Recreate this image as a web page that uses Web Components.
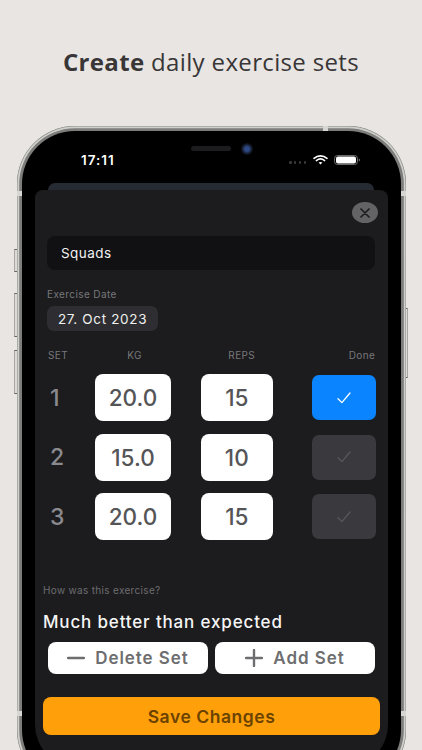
<!DOCTYPE html>
<html lang="en">
<head>
<meta charset="utf-8">
<title>Create daily exercise sets</title>
<style>
  html, body { margin: 0; height: 100%; overflow: hidden; background: #e9e5e3; }
</style>
</head>
<body>
<shot-page>
  <span slot="caption"><b>Create</b> daily exercise sets</span>
  <phone-frame>
    <status-bar time="17:11"></status-bar>
    <exercise-sheet>
      <name-field>Squads</name-field>
      <date-field label="Exercise Date">27. Oct 2023</date-field>
      <set-table>
        <set-row num="1" kg="20.0" reps="15" done></set-row>
        <set-row num="2" kg="15.0" reps="10"></set-row>
        <set-row num="3" kg="20.0" reps="15"></set-row>
      </set-table>
      <feeling-note label="How was this exercise?">Much better than expected</feeling-note>
      <div slot="actions" style="display:flex;gap:7px">
        <action-button icon="minus">Delete Set</action-button>
        <action-button icon="plus">Add Set</action-button>
      </div>
      <save-button slot="save">Save Changes</save-button>
    </exercise-sheet>
  </phone-frame>
</shot-page>

<script>
const UI_FONT = '"Inter", "Liberation Sans", sans-serif';

class ShotPage extends HTMLElement {
  constructor() {
    super();
    this.attachShadow({ mode: 'open' });
    this.shadowRoot.innerHTML = `
      <style>
        :host { display: block; width: 422px; height: 750px; overflow: hidden; background: #e9e5e3; }
        .caption {
          height: 126px; box-sizing: border-box; padding-top: 45px; text-align: center;
          font: 24px/34px "Open Sans", sans-serif; letter-spacing: .35px; color: #383636;
        }
        ::slotted(span) { white-space: nowrap; }
      </style>
      <div class="caption"><slot name="caption"></slot></div>
      <slot></slot>
    `;
  }
}

class PhoneFrame extends HTMLElement {
  constructor() {
    super();
    this.attachShadow({ mode: 'open' });
    this.shadowRoot.innerHTML = `
      <style>
        :host {
          display: block; position: relative; box-sizing: border-box;
          width: 389px; height: 662px; margin-left: 16.5px; padding: 5px;
          border-radius: 58px; background: #7d7d7b;
          box-shadow: inset 0 0 0 .5px #8a8a88, inset 0 0 0 2.2px #cfcfcb;
        }
        .screen {
          height: 100%; box-sizing: border-box; padding: 0 12.8px 0 13px;
          border-radius: 53px; background: #000; overflow: hidden;
          display: flex; flex-direction: column;
        }
        .btn { position: absolute; width: 2.5px; background: #dcd9d7; border-top: 1.5px solid #666; border-bottom: 1.5px solid #666; box-sizing: border-box; }
        .left { left: -2.5px; border-left: 1px solid #a9a7a5; }
        .right { right: -2.5px; border-right: 1px solid #a9a7a5; }
        .b1 { top: 123px; height: 23px; }
        .b2 { top: 167px; height: 44px; }
        .b3 { top: 224px; height: 44px; }
        .b4 { top: 182px; height: 70px; }
        .band { position: absolute; background: #d8d6d3; }
        .bl1, .bl2, .br1, .br2 { width: 5px; height: 4.5px; }
        .bl1, .bl2 { left: 0; }
        .br1, .br2 { right: 0; }
        .bl1, .br1 { top: 65px; }
        .bl2, .br2 { top: 585px; }
        .bt { left: 306px; top: 0; width: 5px; height: 5px; }
        .speaker { position: absolute; left: 174.5px; top: 20px; width: 40px; height: 4.5px; border-radius: 3px; background: #1c1c1e; }
        .cam { position: absolute; left: 224.5px; top: 16.5px; width: 12px; height: 12px; border-radius: 50%; background: radial-gradient(circle, #2d4a86 0 25%, #10141f 60%, #0a0a0c); }
      </style>
      <i class="btn left b1"></i><i class="btn left b2"></i><i class="btn left b3"></i><i class="btn right b4"></i>
      <div class="screen"><slot></slot></div>
      <i class="band bl1"></i><i class="band bl2"></i><i class="band br1"></i><i class="band br2"></i><i class="band bt"></i>
      <i class="speaker"></i><i class="cam"></i>
    `;
  }
}

class StatusBar extends HTMLElement {
  constructor() {
    super();
    this.attachShadow({ mode: 'open' });
    this.shadowRoot.innerHTML = `
      <style>
        :host {
          display: flex; align-items: center; justify-content: space-between;
          height: 52px; flex: none; box-sizing: border-box; padding: 6px 27.7px 0 46.5px;
          color: #fff; font: 600 13.5px ${UI_FONT}; letter-spacing: 1px;
        }
        .right { display: flex; align-items: center; gap: 6px; }
        .dots { display: flex; gap: 2.4px; margin: 5px 1px 0 0; }
        .dots i { width: 2.4px; height: 2.4px; border-radius: 50%; background: #3a3a3c; }
        svg { display: block; }
      </style>
      <span>${this.getAttribute('time')}</span>
      <div class="right">
        <div class="dots"><i></i><i></i><i></i><i></i></div>
        <svg width="15" height="10" viewBox="0 0 15 10" fill="none" stroke="#fff" stroke-linecap="round" stroke-width="1.6">
          <path d="M1 3.3C4.7.1 10.3.1 14 3.3"/>
          <path d="M3.4 5.6C5.8 3.6 9.2 3.6 11.6 5.6"/>
          <path d="M7.5 9.6L5.6 7.5C6.7 6.8 8.3 6.8 9.4 7.5z" fill="#fff" stroke="none"/>
        </svg>
        <svg width="26" height="10" viewBox="0 0 26 10">
          <rect x=".5" y=".5" width="23" height="9" rx="3" fill="none" stroke="#6c6c70"/>
          <rect x="2" y="1.6" width="20" height="6.8" rx="2" fill="#fff"/>
          <path d="M24.8 3.5c.7.3 1.2.8 1.2 1.5s-.5 1.2-1.2 1.5z" fill="#6c6c70"/>
        </svg>
      </div>
    `;
  }
}

class ExerciseSheet extends HTMLElement {
  constructor() {
    super();
    this.attachShadow({ mode: 'open' });
    this.shadowRoot.innerHTML = `
      <style>
        :host { display: block; position: relative; flex: none; font-family: ${UI_FONT}; }
        .back { height: 7px; margin: 0 13.7px 0 13.8px; border-radius: 8px 8px 0 0; background: #252a33; }
        .sheet {
          height: 577px; box-sizing: border-box; padding: 46px 0 0;
          border-radius: 8px 8px 42px 42px; background: #1c1c1e;
        }
        .close {
          position: absolute; right: 10px; top: 19px; width: 25.5px; height: 21px; border-radius: 50%;
          background: #636366; display: flex; align-items: center; justify-content: center;
        }
        .actions { margin: 8px 12.7px 0 13.5px; }
        .save { margin: 23px 7.7px 0 8.5px; }
      </style>
      <div class="back"></div>
      <div class="sheet">
        <slot></slot>
        <div class="actions"><slot name="actions"></slot></div>
        <div class="save"><slot name="save"></slot></div>
      </div>
      <div class="close">
        <svg width="10" height="10" viewBox="0 0 10 10" fill="none" stroke="#1c1c1e" stroke-width="1.7" stroke-linecap="round"><path d="M1 1l8 8M9 1l-8 8"/></svg>
      </div>
    `;
  }
}

class NameField extends HTMLElement {
  constructor() {
    super();
    this.attachShadow({ mode: 'open' });
    this.shadowRoot.innerHTML = `
      <style>
        :host {
          display: flex; align-items: center; height: 34px; margin: 0 12.5px; padding-left: 14px;
          border-radius: 8px; background: #111113; color: #f2f2f2; font-size: 13.5px; letter-spacing: .45px;
        }
      </style>
      <slot></slot>
    `;
  }
}

class DateField extends HTMLElement {
  constructor() {
    super();
    this.attachShadow({ mode: 'open' });
    this.shadowRoot.innerHTML = `
      <style>
        :host { display: block; margin: 18px 12.5px 0; }
        .label { font-size: 10px; line-height: 12px; color: #77777b; letter-spacing: .4px; }
        .pill {
          display: inline-flex; align-items: center; justify-content: center; box-sizing: border-box;
          width: 111px; height: 25px; margin-top: 6px; border-radius: 7px;
          background: #2e2e32; color: #f0f0f0; font-size: 13.5px; letter-spacing: .65px;
        }
      </style>
      <div class="label">${this.getAttribute('label')}</div>
      <div class="pill"><slot></slot></div>
    `;
  }
}

class SetTable extends HTMLElement {
  constructor() {
    super();
    this.attachShadow({ mode: 'open' });
    this.shadowRoot.innerHTML = `
      <style>
        :host { display: block; margin: 18px 12.5px 0; }
        .head {
          display: grid; grid-template-columns: 48px 76px 29.5px 72.5px 39px 1fr;
          font-size: 10px; line-height: 12px; color: #77777b; letter-spacing: .4px;
        }
        .head span { text-align: center; }
        .head .first { text-align: left; padding-left: 1px; }
        .head .kg { padding-left: 3px; }
        .head .reps { padding-left: 10px; }
        .head .last { text-align: right; }
        .rows { display: grid; row-gap: 12.5px; margin-top: 13px; }
      </style>
      <div class="head">
        <span class="first">SET</span><span class="kg">KG</span><span></span><span class="reps">REPS</span><span></span><span class="last">Done</span>
      </div>
      <div class="rows"><slot></slot></div>
    `;
  }
}

class SetRow extends HTMLElement {
  constructor() {
    super();
    this.attachShadow({ mode: 'open' });
    const done = this.hasAttribute('done');
    this.shadowRoot.innerHTML = `
      <style>
        :host {
          display: grid; grid-template-columns: 48px 76px 29.5px 72.5px 39px 63.5px;
          align-items: center; height: 47px;
        }
        .num { padding-left: 3px; font-size: 23px; font-weight: 500; color: #8a8a8e; }
        .box {
          height: 47px; border-radius: 8px; background: #fff; color: #555558;
          display: flex; align-items: center; justify-content: center;
          font-size: 22.5px; font-weight: 500;
        }
        .kg { grid-column: 2; }
        .reps { grid-column: 4; }
        .done {
          grid-column: 6; height: 45px; border-radius: 7px;
          background: ${done ? '#0a84ff' : '#3a3a3e'};
          display: flex; align-items: center; justify-content: center;
        }
      </style>
      <span class="num">${this.getAttribute('num')}</span>
      <div class="box kg">${this.getAttribute('kg')}</div>
      <div class="box reps">${this.getAttribute('reps')}</div>
      <div class="done">
        <svg width="14" height="12" viewBox="0 0 14 12" fill="none" stroke="${done ? '#fff' : '#58585c'}" stroke-width="1.3" stroke-linecap="round" stroke-linejoin="round"><path d="M1 6.8l3.9 3.8L13 1"/></svg>
      </div>
    `;
  }
}

class FeelingNote extends HTMLElement {
  constructor() {
    super();
    this.attachShadow({ mode: 'open' });
    this.shadowRoot.innerHTML = `
      <style>
        :host { display: block; margin: 44px 8.5px 0; }
        .label { font-size: 10px; line-height: 12px; color: #6c6c70; letter-spacing: .32px; }
        .text { margin-top: 14px; font-size: 17px; line-height: 24px; font-weight: 500; color: #f5f5f5; letter-spacing: .84px; white-space: nowrap; }
      </style>
      <div class="label">${this.getAttribute('label')}</div>
      <div class="text"><slot></slot></div>
    `;
  }
}

class ActionButton extends HTMLElement {
  constructor() {
    super();
    this.attachShadow({ mode: 'open' });
    const isPlus = this.getAttribute('icon') === 'plus';
    this.shadowRoot.innerHTML = `
      <style>
        :host {
          flex: 1 1 0; height: 32px; display: flex; align-items: center; justify-content: center; gap: 10px;
          border-radius: 8px; background: #fff; color: #6e6e70;
          font-size: 17px; font-weight: 600; letter-spacing: .95px;
        }
        svg { display: block; }
      </style>
      <svg width="18" height="18" viewBox="0 0 18 18" fill="none" stroke="#6e6e70" stroke-width="2.4" stroke-linecap="round">
        ${isPlus ? '<path d="M1 9h16M9 1v16"/>' : '<path d="M1 9h16"/>'}
      </svg>
      <slot></slot>
    `;
  }
}

class SaveButton extends HTMLElement {
  constructor() {
    super();
    this.attachShadow({ mode: 'open' });
    this.shadowRoot.innerHTML = `
      <style>
        :host {
          display: flex; align-items: center; justify-content: center; height: 38px;
          border-radius: 8px; background: #ff9f0a; color: #6b4300;
          font-size: 17.5px; font-weight: 600; letter-spacing: .55px;
        }
      </style>
      <slot></slot>
    `;
  }
}

customElements.define('shot-page', ShotPage);
customElements.define('phone-frame', PhoneFrame);
customElements.define('status-bar', StatusBar);
customElements.define('exercise-sheet', ExerciseSheet);
customElements.define('name-field', NameField);
customElements.define('date-field', DateField);
customElements.define('set-table', SetTable);
customElements.define('set-row', SetRow);
customElements.define('feeling-note', FeelingNote);
customElements.define('action-button', ActionButton);
customElements.define('save-button', SaveButton);
</script>
</body>
</html>
